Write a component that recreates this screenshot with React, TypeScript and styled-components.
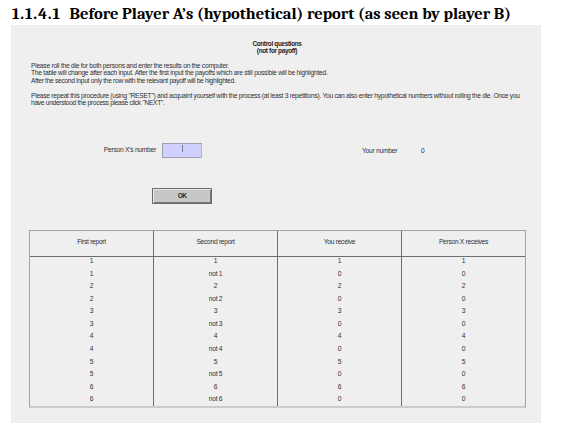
import React from 'react';
import styled, { createGlobalStyle } from 'styled-components';

const GlobalStyle = createGlobalStyle`
  *, *::before, *::after { box-sizing: border-box; }
  body { margin: 0; background: #fff; overflow: hidden; }
`;

const Page = styled.main`
  width: 568px;
  height: 442px;
  display: flex;
  flex-direction: column;
  background: #fff;
  color: #303034;
  font: 6.7px/7.5px 'Liberation Sans', Arial, sans-serif;
`;

const Heading = styled.h1`
  margin: 0;
  height: 25px;
  padding: 4px 0 0 12px;
  display: flex;
  gap: 9.5px;
  color: #000;
  font: bold 16.5px/20px Cambria, Caladea, 'Liberation Serif', serif;
  white-space: nowrap;
`;

const SectionNumber = styled.span`
  letter-spacing: 0.8px;
  margin-right: -0.8px;
`;

const Panel = styled.section`
  width: 530px;
  height: 398px;
  margin-left: 11px;
  padding: 14.5px 15px 0 18px;
  display: flex;
  flex-direction: column;
  background: #efefef;
`;

const Title = styled.h2`
  margin: 0 0 7.2px;
  padding-right: 1px;
  color: #222226;
  font-size: 6.4px;
  line-height: 7.4px;
  font-weight: bold;
  letter-spacing: -0.32px;
  text-align: center;
`;

const Paragraph = styled.div`
  margin-bottom: 7.5px;
  padding-left: 2px;
`;

const Line = styled.div<{ $tracking: number }>`
  letter-spacing: ${(p) => p.$tracking}px;
  white-space: nowrap;
`;

const Fields = styled.div`
  height: 15px;
  margin-top: 29px;
  display: grid;
  grid-template-columns: 127px 6px 40px 160px 35px 24px 10px;
  align-items: center;
`;

const Label = styled.label`
  padding-bottom: 1px;
  letter-spacing: -0.26px;
  text-align: right;
  white-space: nowrap;
`;

const NumberBox = styled.div`
  grid-column: 3;
  height: 15px;
  padding-top: 1px;
  display: flex;
  justify-content: center;
  background: #d1d1ff;
  border: 1px solid #9e9eb0;
  border-right-color: #b5b5bd;
`;

const Caret = styled.i`
  width: 1px;
  height: 7px;
  background: #7b7b94;
`;

const OwnLabel = styled(Label)`
  grid-column: 5;
  padding: 0;
  text-align: left;
`;

const OwnNumber = styled.output`
  grid-column: 7;
`;

const OkButton = styled.button`
  width: 60px;
  height: 16px;
  margin: 30px 0 26px 123px;
  padding: 0;
  border: 1px solid #6d6d6d;
  border-radius: 0;
  box-shadow: inset 1px 1px 0 #e6e6e6, inset -1px -1px 0 #777;
  background: #c7c7c7;
  color: #222;
  font: bold 6.5px/12px 'Liberation Sans', Arial, sans-serif;
  letter-spacing: -0.5px;
`;

const Table = styled.div`
  width: 497px;
  height: 178px;
  display: grid;
  grid-template-columns: 123px repeat(3, 124px);
  grid-template-rows: 175px;
  border: 1px solid #a3a3a3;
  border-bottom: 2px solid #cbcbcb;
`;

const Column = styled.div`
  display: flex;
  flex-direction: column;
  text-align: center;
  letter-spacing: -0.3px;

  & + & {
    border-left: 1px solid #6e6e6e;
  }
`;

const ColumnHead = styled.div`
  height: 26px;
  padding-bottom: 3px;
  flex: none;
  display: flex;
  align-items: center;
  justify-content: center;
  border-bottom: 1px solid #6e6e6e;
`;

const Cell = styled.div`
  height: 12.57px;
  flex: none;
  line-height: 8px;

  &:last-child {
    flex: 1;
  }
`;

const faces = [1, 2, 3, 4, 5, 6];

const columns = [
  { title: 'First report', values: faces.flatMap((n) => [`${n}`, `${n}`]) },
  { title: 'Second report', values: faces.flatMap((n) => [`${n}`, `not ${n}`]) },
  { title: 'You receive', values: faces.flatMap((n) => [`${n}`, '0']) },
  { title: 'Person X receives', values: faces.flatMap((n) => [`${n}`, '0']) },
];

export default function App() {
  return (
    <>
      <GlobalStyle />
      <Page>
        <Heading>
          <SectionNumber>1.1.4.1</SectionNumber>
          <span>Before Player A’s (hypothetical) report (as seen by player B)</span>
        </Heading>
        <Panel>
          <Title>
            Control questions
            <br />
            (not for payoff)
          </Title>
          <Paragraph>
            <Line $tracking={-0.267}>
              Please roll the die for both persons and enter the results on the computer.
            </Line>
            <Line $tracking={-0.262}>
              The table will change after each input. After the first input the payoffs which are
              still possible will be highlighted.
            </Line>
            <Line $tracking={-0.315}>
              After the second input only the row with the relevant payoff will be highlighted.
            </Line>
          </Paragraph>
          <Paragraph>
            <Line $tracking={-0.278}>
              Please repeat this procedure (using "RESET") and acquaint yourself with the process
              (at least 3 repetitions). You can also enter hypothetical numbers without rolling the
              die. Once you
            </Line>
            <Line $tracking={-0.32}>have understood the process please click "NEXT".</Line>
          </Paragraph>
          <Fields>
            <Label>Person X's number</Label>
            <NumberBox>
              <Caret />
            </NumberBox>
            <OwnLabel>Your number</OwnLabel>
            <OwnNumber>0</OwnNumber>
          </Fields>
          <OkButton type="button">OK</OkButton>
          <Table>
            {columns.map((column) => (
              <Column key={column.title}>
                <ColumnHead>{column.title}</ColumnHead>
                {column.values.map((value, i) => (
                  <Cell key={i}>{value}</Cell>
                ))}
              </Column>
            ))}
          </Table>
        </Panel>
      </Page>
    </>
  );
}
